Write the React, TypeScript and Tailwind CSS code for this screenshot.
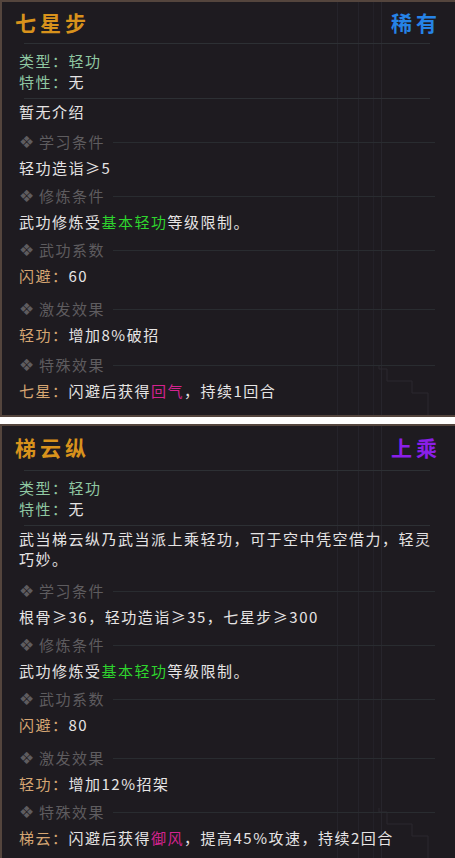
import React from 'react';

type Seg = { text: string; color?: string };
type Section = { title: string; lines: Seg[][]; gapAfter?: number };

type Skill = {
  name: string;
  rarity: string;
  rarityClass: string;
  kind: string;
  trait: string;
  intro: string[];
  sections: Section[];
};

const skills: Skill[] = [
  {
    name: '七星步',
    rarity: '稀有',
    rarityClass: 'text-[#2683e6]',
    kind: '轻功',
    trait: '无',
    intro: ['暂无介绍'],
    sections: [
      { title: '学习条件', lines: [[{ text: '轻功造诣≥5' }]] },
      { title: '修炼条件', lines: [[{ text: '武功修炼受' }, { text: '基本轻功', color: 'green' }, { text: '等级限制。' }]] },
      { title: '武功系数', lines: [[{ text: '闪避：', color: 'tan' }, { text: '60' }]], gapAfter: 10 },
      { title: '激发效果', lines: [[{ text: '轻功：', color: 'tan' }, { text: '增加8%破招' }]], gapAfter: 7 },
      { title: '特殊效果', lines: [[{ text: '七星：', color: 'tan' }, { text: '闪避后获得' }, { text: '回气', color: 'pink' }, { text: '，持续1回合' }]] },
    ],
  },
  {
    name: '梯云纵',
    rarity: '上乘',
    rarityClass: 'text-[#8a1fe8]',
    kind: '轻功',
    trait: '无',
    intro: ['武当梯云纵乃武当派上乘轻功，可于空中凭空借力，轻灵', '巧妙。'],
    sections: [
      { title: '学习条件', lines: [[{ text: '根骨≥36，轻功造诣≥35，七星步≥300' }]] },
      { title: '修炼条件', lines: [[{ text: '武功修炼受' }, { text: '基本轻功', color: 'green' }, { text: '等级限制。' }]] },
      { title: '武功系数', lines: [[{ text: '闪避：', color: 'tan' }, { text: '80' }]], gapAfter: 10 },
      { title: '激发效果', lines: [[{ text: '轻功：', color: 'tan' }, { text: '增加12%招架' }]] },
      { title: '特殊效果', lines: [[{ text: '梯云：', color: 'tan' }, { text: '闪避后获得' }, { text: '御风', color: 'pink' }, { text: '，提高45%攻速，持续2回合' }]] },
    ],
  },
];

const segClass = (c?: string) => {
  switch (c) {
    case 'green': return 'text-[#2ed52e]';
    case 'tan': return 'text-[#d6a673]';
    case 'pink': return 'text-[#d4238f]';
    default: return 'text-[#e6e4e4]';
  }
};

function Rule() {
  return <div className="h-px bg-[#2d3034] mx-[5px]" />;
}

// faint panel decoration behind the text
function Backdrop() {
  return (
    <div className="absolute inset-0 pointer-events-none">
      <div className="absolute top-0 bottom-0 left-[335px] w-px bg-[#25232a]" />
      <div className="absolute top-0 bottom-0 left-[356px] w-px bg-[#25232a]" />
      <div className="absolute top-0 bottom-0 left-[371px] w-px bg-[#232128]" />
      <div className="absolute top-0 bottom-0 left-[379px] w-px bg-[#27252c]" />
      <svg className="absolute right-0 bottom-0" width="80" height="50" viewBox="0 0 80 50">
        <polyline points="4,0 4,4 12,4 12,16 37,16 37,28 53,28 53,50" fill="none" stroke="#2a282e" strokeWidth="1" />
      </svg>
    </div>
  );
}

function SkillCard({ skill, first }: { skill: Skill; first?: boolean }) {
  return (
    <div className={`relative bg-[#1e1b20] border-[#54453d] border-l-2 border-t-2 ${first ? 'border-b-2 h-[417px]' : 'h-[434px]'} overflow-hidden`}>
      <Backdrop />
      <div className="relative pl-[17px] pr-[20px]">
        {/* title bar */}
        <div className={`flex items-center justify-between ${first ? 'h-[41px]' : 'h-[44px]'} -mr-[6px] -ml-[4px]`}>
          <span className="text-[21px] font-bold tracking-[4px] text-[#d8921c]">{skill.name}</span>
          <span className={`text-[21px] font-bold tracking-[4px] ${skill.rarityClass}`}>{skill.rarity}</span>
        </div>
        <Rule />
        <div className="pt-[6px] pb-[6px] leading-[21px]">
          <div className="text-[#8fc8a2]">类型：{skill.kind}</div>
          <div><span className="text-[#8fc8a2]">特性：</span><span className="text-[#e6e4e4]">{skill.trait}</span></div>
        </div>
        <Rule />
        <div className="pt-[3px] leading-[20px] text-[#e6e4e4]">
          {skill.intro.map((l, i) => <div key={i}>{l}</div>)}
        </div>
        <div className={first ? 'pt-[7px]' : 'pt-[9px]'}>
          {skill.sections.map((s, i) => (
            <div key={i} style={{ paddingBottom: s.gapAfter ?? 5 }}>
              <div className="flex items-center h-[26px]">
                <span className="w-[20px] text-[17px] leading-none text-[#5e5c5f] font-['DejaVu_Sans',sans-serif]">❖</span>
                <span className="text-[#5e5c5f]">{s.title}</span>
                <div className="ml-2 flex-1 h-px bg-[#292c30]" />
              </div>
              <div className="mt-[2px] leading-[21px]">
                {s.lines.map((line, j) => (
                  <div key={j}>
                    {line.map((seg, k) => <span key={k} className={segClass(seg.color)}>{seg.text}</span>)}
                  </div>
                ))}
              </div>
            </div>
          ))}
        </div>
      </div>
    </div>
  );
}

export default function App() {
  return (
    <div className="w-[455px] h-[858px] bg-white overflow-hidden font-['Noto_Sans_CJK_SC',sans-serif] text-[15px] tracking-[1.5px]">
      <SkillCard skill={skills[0]} first />
      <div className="h-[7px]" />
      <SkillCard skill={skills[1]} />
    </div>
  );
}
